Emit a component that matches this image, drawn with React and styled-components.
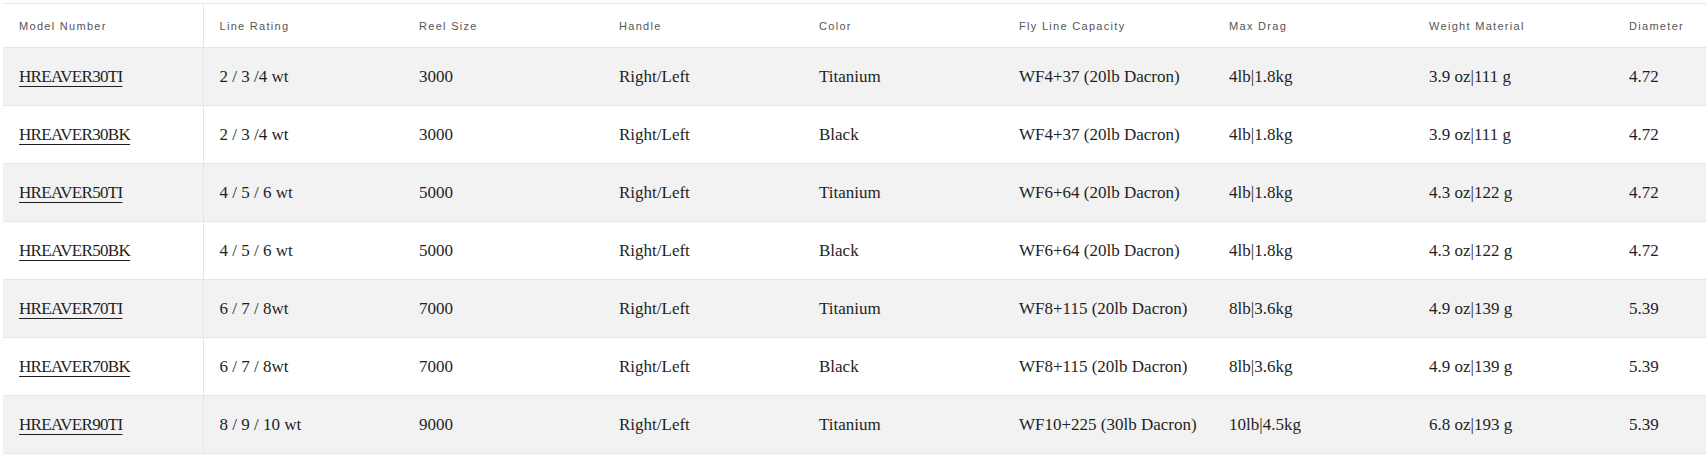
import React from 'react';
import styled, { createGlobalStyle } from 'styled-components';

const GlobalStyle = createGlobalStyle`
  html, body {
    margin: 0;
    padding: 0;
    background: #ffffff;
  }
`;

const Wrapper = styled.div`
  padding: 3px 0 0 3px;
  width: 1706px;
  height: 454px;
  overflow: hidden;
  box-sizing: border-box;
`;

const Table = styled.table`
  border-collapse: collapse;
  table-layout: fixed;
  width: 1820px;
  border-top: 1px solid #e6e6e6;
`;

const HeadCell = styled.th`
  height: 43px;
  padding: 0 16px;
  text-align: left;
  vertical-align: middle;
  font-family: "Liberation Sans", Arial, sans-serif;
  font-size: 11px;
  font-weight: 400;
  letter-spacing: 1.3px;
  color: #555555;
  white-space: nowrap;
  border-bottom: 1px solid #e6e6e6;
  border-right: ${p => (p.$sticky ? '1px solid #e6e6e6' : 'none')};
`;

const Row = styled.tr`
  background: ${p => (p.$striped ? '#f2f2f2' : '#ffffff')};
  border-bottom: 1px solid #e6e6e6;
`;

const Cell = styled.td`
  height: 57px;
  padding: 0 16px;
  vertical-align: middle;
  font-family: "Liberation Serif", "Times New Roman", serif;
  font-size: 17px;
  color: #1f1f1f;
  white-space: nowrap;
  border-right: ${p => (p.$sticky ? '1px solid #e6e6e6' : 'none')};
`;

const ModelLink = styled.a`
  color: #1f1f1f;
  letter-spacing: -0.7px;
  text-decoration: underline;
  text-decoration-thickness: 1px;
  text-underline-offset: 4px;
`;

const columns = [
  { label: 'Model Number', width: 200 },
  { label: 'Line Rating', width: 200 },
  { label: 'Reel Size', width: 200 },
  { label: 'Handle', width: 200 },
  { label: 'Color', width: 200 },
  { label: 'Fly Line Capacity', width: 210 },
  { label: 'Max Drag', width: 200 },
  { label: 'Weight Material', width: 200 },
  { label: 'Diameter', width: 210 }
];

const rows = [
  ['HREAVER30TI', '2 / 3 /4 wt', '3000', 'Right/Left', 'Titanium', 'WF4+37 (20lb Dacron)', '4lb|1.8kg', '3.9 oz|111 g', '4.72'],
  ['HREAVER30BK', '2 / 3 /4 wt', '3000', 'Right/Left', 'Black', 'WF4+37 (20lb Dacron)', '4lb|1.8kg', '3.9 oz|111 g', '4.72'],
  ['HREAVER50TI', '4 / 5 / 6 wt', '5000', 'Right/Left', 'Titanium', 'WF6+64 (20lb Dacron)', '4lb|1.8kg', '4.3 oz|122 g', '4.72'],
  ['HREAVER50BK', '4 / 5 / 6 wt', '5000', 'Right/Left', 'Black', 'WF6+64 (20lb Dacron)', '4lb|1.8kg', '4.3 oz|122 g', '4.72'],
  ['HREAVER70TI', '6 / 7 / 8wt', '7000', 'Right/Left', 'Titanium', 'WF8+115 (20lb Dacron)', '8lb|3.6kg', '4.9 oz|139 g', '5.39'],
  ['HREAVER70BK', '6 / 7 / 8wt', '7000', 'Right/Left', 'Black', 'WF8+115 (20lb Dacron)', '8lb|3.6kg', '4.9 oz|139 g', '5.39'],
  ['HREAVER90TI', '8 / 9 / 10 wt', '9000', 'Right/Left', 'Titanium', 'WF10+225 (30lb Dacron)', '10lb|4.5kg', '6.8 oz|193 g', '5.39']
];

const App = () => {
  return (
    <Wrapper>
      <GlobalStyle />
      <Table>
        <colgroup>
          {columns.map(col => (
            <col key={col.label} style={{ width: col.width }} />
          ))}
        </colgroup>
        <thead>
          <tr>
            {columns.map((col, i) => (
              <HeadCell key={col.label} $sticky={i === 0}>{col.label}</HeadCell>
            ))}
          </tr>
        </thead>
        <tbody>
          {rows.map((row, r) => (
            <Row key={row[0]} $striped={r % 2 === 0}>
              {row.map((value, i) => (
                <Cell key={i} $sticky={i === 0}>
                  {i === 0 ? <ModelLink href="#">{value}</ModelLink> : value}
                </Cell>
              ))}
            </Row>
          ))}
        </tbody>
      </Table>
    </Wrapper>
  );
};

export default App;
